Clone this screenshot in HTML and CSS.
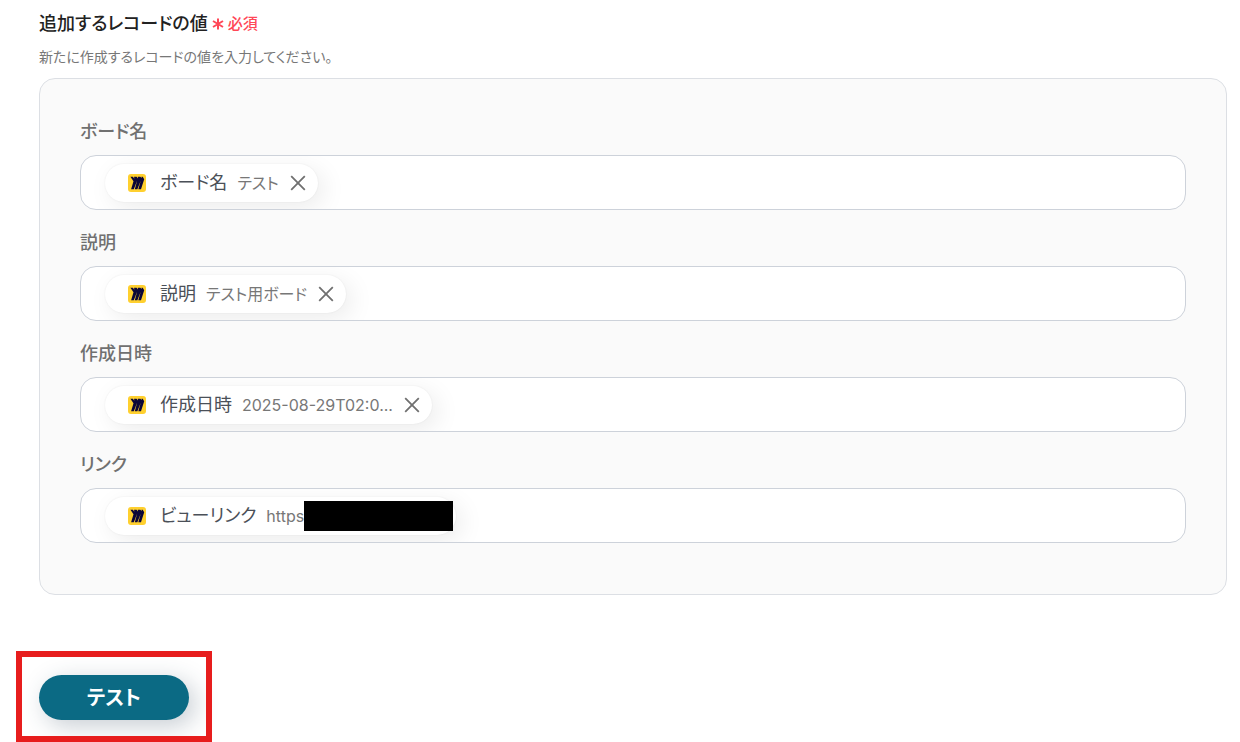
FILE: index.html
```
<!DOCTYPE html>
<html lang="ja">
<head>
    <meta charset="UTF-8">
    <meta name="viewport" content="width=device-width, initial-scale=1.0">
    <title>追加するレコードの値</title>
    <link rel="stylesheet" href="styles.css">
</head>
<body>
    <svg width="0" height="0" class="sprite" aria-hidden="true">
        <symbol id="logo" viewBox="0 0 18 18">
            <rect width="18" height="18" rx="3" fill="#ffd02f"/>
            <path d="M2.400 2.800h2.500l1.400 2L6.100 2.800h2.500l1.400 1.800L9.800 2.800h2.600l1.300 1.400L13.500 2.800h1.200l1.500 2.500L13 15.200h-2.700l2.400-8.400L9.400 15.200H6.800l2.400-8.800L5.800 15.200H3.100l2.400-8z" fill="#0b0638"/>
        </symbol>
        <symbol id="close" viewBox="0 0 16 16">
            <path d="M1.200 1.200l13.600 13.600M14.800 1.200L1.200 14.800" stroke="#707070" stroke-width="1.800" fill="none"/>
        </symbol>
    </svg>
    <form class="record">
        <h2 class="title">追加するレコードの値
            <span class="required">
                <svg width="12" height="12" viewBox="0 0 12 12"><path d="M6 0.500v11M1 3l10 6M11 3L1 9" stroke="#ff4757" stroke-width="2"/></svg>
                必須
            </span>
        </h2>
        <p class="description">新たに作成するレコードの値を入力してください。</p>
        <div class="panel">
            <div class="field">
                <label for="board">ボード名</label>
                <div class="box">
                    <div class="chip">
                        <svg class="logo"><use href="#logo"/></svg>
                        <span class="name">ボード名</span>
                        <span class="value">テスト</span>
                        <button type="button" class="remove" aria-label="削除"><svg><use href="#close"/></svg></button>
                    </div>
                    <input type="text" id="board">
                </div>
            </div>
            <div class="field">
                <label for="detail">説明</label>
                <div class="box">
                    <div class="chip">
                        <svg class="logo"><use href="#logo"/></svg>
                        <span class="name">説明</span>
                        <span class="value">テスト用ボード</span>
                        <button type="button" class="remove" aria-label="削除"><svg><use href="#close"/></svg></button>
                    </div>
                    <input type="text" id="detail">
                </div>
            </div>
            <div class="field">
                <label for="created">作成日時</label>
                <div class="box">
                    <div class="chip">
                        <svg class="logo"><use href="#logo"/></svg>
                        <span class="name">作成日時</span>
                        <span class="value">2025-08-29T02:0...</span>
                        <button type="button" class="remove" aria-label="削除"><svg><use href="#close"/></svg></button>
                    </div>
                    <input type="text" id="created">
                </div>
            </div>
            <div class="field">
                <label for="link">リンク</label>
                <div class="box">
                    <div class="chip">
                        <svg class="logo"><use href="#logo"/></svg>
                        <span class="name">ビューリンク</span>
                        <span class="value">https</span>
                        <span class="mask"></span>
                    </div>
                    <input type="text" id="link">
                </div>
            </div>
        </div>
        <div class="actions">
            <button type="button" class="test">テスト</button>
        </div>
    </form>
</body>
</html>
```
FILE: styles.css
```
*, *::before {
    box-sizing: border-box;
}
body {
    margin: 0;
    background-color: #fff;
    font-family: Inter, "Noto Sans CJK JP", sans-serif;
    font-feature-settings: "palt";
    color: #222;
}
button, input {
    font-family: inherit;
    font-feature-settings: inherit;
}
.sprite {
    position: absolute;
}
.record {
    padding: 11px 13px 22px 39px;
}
.title {
    display: flex;
    align-items: center;
    gap: 4px;
    margin: 0;
    font-size: 18px;
    line-height: 24px;
    font-weight: 500;
}
.required {
    display: flex;
    align-items: center;
    gap: 4px;
    padding-top: 1px;
    font-size: 15px;
    color: #ff4757;
}
.description {
    margin: 10px 0;
    font-size: 14px;
    line-height: 22px;
    color: #777;
}
.panel {
    display: flex;
    flex-direction: column;
    gap: 20px;
    padding: 40px 40px 51px;
    background-color: #fafafa;
    border: 1px solid #dcdfe4;
    border-radius: 16px;
}
.field label {
    display: block;
    margin-bottom: 10px;
    font-size: 18px;
    line-height: 26px;
    font-weight: 500;
    color: #707070;
}
.box {
    display: flex;
    align-items: center;
    height: 55px;
    padding: 0 24px;
    overflow: hidden;
    background-color: #fff;
    border: 1px solid #cdd2da;
    border-radius: 16px;
}
.box input {
    flex: 1;
    min-width: 0;
    border: none;
    outline: none;
    background: transparent;
    font-size: 18px;
}
.chip {
    display: flex;
    align-items: center;
    height: 38px;
    padding: 0 12px 0 23px;
    background-color: #fff;
    border-radius: 20px;
    box-shadow: 0 0 2px rgba(0, 0, 0, 0.07), 6px 6px 24px rgba(0, 0, 0, 0.08);
    white-space: nowrap;
}
.logo {
    width: 18px;
    height: 18px;
    margin-right: 14px;
}
.name {
    margin-right: 10px;
    padding-bottom: 3px;
    font-size: 18px;
    color: #4b5058;
}
.value {
    font-size: 16px;
    line-height: 24px;
    color: #777;
}
.remove {
    display: flex;
    margin-left: 11px;
    padding: 0;
    border: none;
    background: none;
}
.remove svg {
    width: 16px;
    height: 16px;
}
/* hides the rest of the url */
.mask {
    width: 149px;
    height: 30px;
    margin-right: -9px;
    background-color: #000;
}
.actions {
    position: relative;
    margin-top: 80px;
}
.actions::before {
    content: "";
    position: absolute;
    top: -24px;
    left: -23px;
    width: 196px;
    height: 91px;
    border: 6px solid #e71d1d;
}
.test {
    display: block;
    width: 150px;
    height: 45px;
    padding: 0 0 2px;
    border: none;
    border-radius: 23px;
    background-color: #0b6a84;
    box-shadow: 6px 6px 24px rgba(40, 60, 85, 0.26);
    color: #fff;
    font-size: 20px;
    font-weight: 700;
}
```
